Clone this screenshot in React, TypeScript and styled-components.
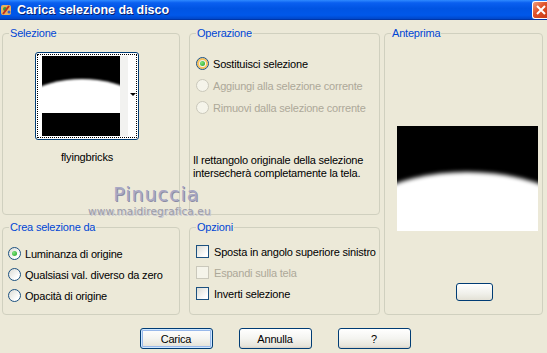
import React from 'react'
import styled, { createGlobalStyle, css } from 'styled-components'

const Global = createGlobalStyle`
	html, body {
		margin: 0;
		padding: 0;
		background: #ECE9D8;
		width: 547px;
		height: 353px;
		overflow: hidden;
	}
	body {
		font-family: "Liberation Sans", Arial, sans-serif;
		font-size: 11px;
		letter-spacing: -0.2px;
		color: #000;
	}
`

const Window = styled.div`
	width: 547px;
	height: 353px;
	display: flex;
	flex-direction: column;
	background: #ECE9D8;
	position: relative;
	overflow: hidden;
`

const TitleBar = styled.div`
	height: 19px;
	flex-shrink: 0;
	display: flex;
	align-items: center;
	background: linear-gradient(#2F8AFF 0%, #0A5FF0 15%, #0054E3 45%, #0058EA 80%, #0046C8 100%);
	border-bottom: 1px solid #0036A8;
`

const TitleIcon = styled.svg`
	width: 14px;
	height: 14px;
	flex-shrink: 0;
`

const TitleText = styled.div`
	margin-left: 3px;
	flex: 1;
	color: #fff;
	font-weight: bold;
	font-size: 12.5px;
	letter-spacing: 0;
	text-shadow: 1px 1px 0 #0A1E6C;
`

const CloseBtn = styled.div`
	width: 14px;
	height: 16px;
	align-self: flex-start;
	margin-top: 1px;
	background: linear-gradient(135deg, #F0A080, #E0522A 45%, #C83A14);
	border: 1px solid #fff;
	border-right: none;
	border-radius: 3px 0 0 3px;
	display: flex;
	align-items: center;
`

const Body = styled.div`
	display: grid;
	grid-template-columns: 178px 9px 191px 4px 159px;
	grid-template-rows: 188px 94px;
	row-gap: 6px;
	padding: 7px 0 0 2px;
`

const Group = styled.fieldset<{ $col: number; $span?: boolean }>`
	grid-column: ${p => p.$col};
	${p => p.$span && css`grid-row: 1 / span 2;`}
	margin: 0;
	padding: 0;
	min-width: 0;
	border: 1px solid #D0D0BF;
	border-radius: 4px;
`

const Legend = styled.legend`
	color: #0046D5;
	font-size: 11px;
	line-height: 13px;
	padding: 0 1px;
	margin-left: 6px;
`

const SelBox = styled.div`
	display: flex;
	flex-direction: column;
	align-items: center;
	width: 102px;
	margin: 12px 0 0 33px;
	gap: 11px;
`

const Thumb = styled.div`
	width: 100px;
	height: 84px;
	border: 1px solid #003C74;
	border-radius: 3px;
	background: #fff;
	padding: 1px;
	box-sizing: content-box;
`

const FocusRing = styled.div`
	height: 82px;
	border: 1px dotted #000;
	display: flex;
	align-items: flex-start;
	padding: 0 0 0 4px;
`

const Strip = styled.div`
	width: 8px;
	height: 80px;
	background: #F2F2F0;
	margin-top: 1px;
`

const Arrow = styled.div`
	width: 0;
	height: 0;
	margin: 38px 0 0 2px;
	border-left: 3px solid transparent;
	border-right: 3px solid transparent;
	border-top: 3px solid #000;
`

const Caption = styled.div`
	text-align: center;
`

const Options = styled.div<{ $top: number; $left: number; $gap: number }>`
	display: flex;
	flex-direction: column;
	gap: ${p => p.$gap}px;
	padding: ${p => p.$top}px 0 0 ${p => p.$left}px;
`

const Option = styled.div<{ $disabled?: boolean }>`
	display: flex;
	align-items: center;
	height: 13px;
	gap: 4px;
	color: ${p => (p.$disabled ? '#ACA899' : '#000')};
	white-space: nowrap;
`

const Radio = styled.span<{ $checked?: boolean; $disabled?: boolean; $hot?: boolean }>`
	width: 11px;
	height: 11px;
	border-radius: 50%;
	border: 1px solid ${p => (p.$disabled ? '#CAC8BB' : '#1C5180')};
	background: ${p => (p.$disabled ? '#F5F4EA' : 'linear-gradient(135deg, #DCDCD5, #FFFFFF 75%)')};
	display: flex;
	align-items: center;
	justify-content: center;
	flex-shrink: 0;
	${p => p.$hot && css`box-shadow: inset 0 0 0 2px #F9C25A;`}
	&::after {
		content: '';
		width: 5px;
		height: 5px;
		border-radius: 50%;
		background: radial-gradient(circle at 35% 35%, #7EE67E, #21A121);
		display: ${p => (p.$checked ? 'block' : 'none')};
	}
`

const Check = styled.span<{ $disabled?: boolean }>`
	width: 11px;
	height: 11px;
	border: 1px solid ${p => (p.$disabled ? '#CAC8BB' : '#1C5180')};
	background: ${p => (p.$disabled ? '#F5F4EA' : 'linear-gradient(135deg, #DCDCD5, #FFFFFF 80%)')};
	flex-shrink: 0;
	margin-right: 1px;
`

const Note = styled.div`
	padding: 40px 0 0 3px;
	line-height: 13px;
`

const PreviewCol = styled.div`
	display: flex;
	flex-direction: column;
	align-items: flex-start;
	padding: 86px 0 0 12px;
`

const SmallBtn = styled.div`
	width: 35px;
	height: 16px;
	margin: 52px 0 0 59px;
	border: 1px solid #003C74;
	border-radius: 3px;
	background: linear-gradient(#FFFFFF, #F0F0EA 60%, #E3E1D6);
`

const ButtonRow = styled.div`
	display: flex;
	justify-content: center;
	gap: 26px;
	padding: 13px 0 0 3px;
`

const Button = styled.div<{ $default?: boolean }>`
	width: 71px;
	height: 19px;
	border: 1px solid #003C74;
	border-radius: 3px;
	background: linear-gradient(#FFFFFF, #F4F4F0 50%, #E6E4DA 90%, #D6D0C5);
	display: flex;
	align-items: center;
	justify-content: center;
	${p => p.$default && css`box-shadow: inset 0 0 0 1px #CEE7FF, inset 0 0 0 2px #98B8EA;`}
`

const Watermark = styled.div`
	position: absolute;
	left: 88px;
	top: 183px;
	display: flex;
	flex-direction: column;
	align-items: center;
	pointer-events: none;
	font-family: "DejaVu Sans", sans-serif;
	letter-spacing: 0;
`

const WmName = styled.div`
	font-size: 19px;
	color: #A8A8C4;
	letter-spacing: 1px;
	margin-left: 14px;
	text-shadow: 1px 1px 0 #8C8CA4;
`

const WmUrl = styled.div`
	font-size: 10.5px;
	color: #9C9CA8;
	letter-spacing: 0.1px;
	text-shadow: 1px 1px 0 #C8C8D4;
`

const ThumbImage = () => (
	<svg width="80" height="80" style={{ marginTop: 1 }}>
		<defs>
			<filter id="tb" x="-10%" y="-10%" width="120%" height="120%">
				<feGaussianBlur stdDeviation="1.2" />
			</filter>
			<clipPath id="tc">
				<rect x="0" y="0" width="80" height="57" />
			</clipPath>
		</defs>
		<rect width="80" height="80" fill="#000" />
		<g clipPath="url(#tc)">
			<ellipse cx="40" cy="75" rx="80" ry="52" fill="#fff" filter="url(#tb)" />
		</g>
	</svg>
)

const PreviewImage = () => (
	<svg width="141" height="105">
		<defs>
			<filter id="pb" x="-10%" y="-10%" width="120%" height="120%">
				<feGaussianBlur stdDeviation="2" />
			</filter>
		</defs>
		<rect width="141" height="105" fill="#000" />
		<ellipse cx="70" cy="128" rx="140" ry="82" fill="#fff" filter="url(#pb)" />
	</svg>
)

export default function App() {
	return (
		<Window>
			<Global />
			<TitleBar>
				<TitleIcon viewBox="0 0 14 14">
					<rect x="1" y="2" width="10" height="10" rx="2" fill="#E8B060" />
					<circle cx="5" cy="6" r="2" fill="#3A9A3A" />
					<path d="M3 11 L9 3" stroke="#C03020" strokeWidth="2" />
					<circle cx="9" cy="9" r="1.5" fill="#3060D0" />
				</TitleIcon>
				<TitleText>Carica selezione da disco</TitleText>
				<CloseBtn>
					<svg width="12" height="12" viewBox="0 0 12 12" style={{ marginLeft: 2 }}>
						<path d="M2 2 L10 10 M10 2 L2 10" stroke="#fff" strokeWidth="2" />
					</svg>
				</CloseBtn>
			</TitleBar>

			<Body>
				<Group $col={1}>
					<Legend>Selezione</Legend>
					<SelBox>
						<Thumb>
							<FocusRing>
								<ThumbImage />
								<Strip />
								<Arrow />
							</FocusRing>
						</Thumb>
						<Caption>flyingbricks</Caption>
					</SelBox>
				</Group>

				<Group $col={3}>
					<Legend>Operazione</Legend>
					<Options $top={17} $left={6} $gap={9}>
						<Option><Radio $checked $hot />Sostituisci selezione</Option>
						<Option $disabled><Radio $disabled />Aggiungi alla selezione corrente</Option>
						<Option $disabled><Radio $disabled />Rimuovi dalla selezione corrente</Option>
					</Options>
					<Note>
						Il rettangolo originale della selezione<br />
						intersecherà completamente la tela.
					</Note>
				</Group>

				<Group $col={5} $span>
					<Legend>Anteprima</Legend>
					<PreviewCol>
						<PreviewImage />
						<SmallBtn />
					</PreviewCol>
				</Group>

				<Group $col={1}>
					<Legend>Crea selezione da</Legend>
					<Options $top={13} $left={5} $gap={8}>
						<Option><Radio $checked />Luminanza di origine</Option>
						<Option><Radio />Qualsiasi val. diverso da zero</Option>
						<Option><Radio />Opacità di origine</Option>
					</Options>
				</Group>

				<Group $col={3}>
					<Legend>Opzioni</Legend>
					<Options $top={11} $left={6} $gap={8}>
						<Option><Check />Sposta in angolo superiore sinistro</Option>
						<Option $disabled><Check $disabled />Espandi sulla tela</Option>
						<Option><Check />Inverti selezione</Option>
					</Options>
				</Group>
			</Body>

			<ButtonRow>
				<Button $default>Carica</Button>
				<Button>Annulla</Button>
				<Button>?</Button>
			</ButtonRow>

			<Watermark>
				<WmName>Pinuccia</WmName>
				<WmUrl>www.maidiregrafica.eu</WmUrl>
			</Watermark>
		</Window>
	)
}
